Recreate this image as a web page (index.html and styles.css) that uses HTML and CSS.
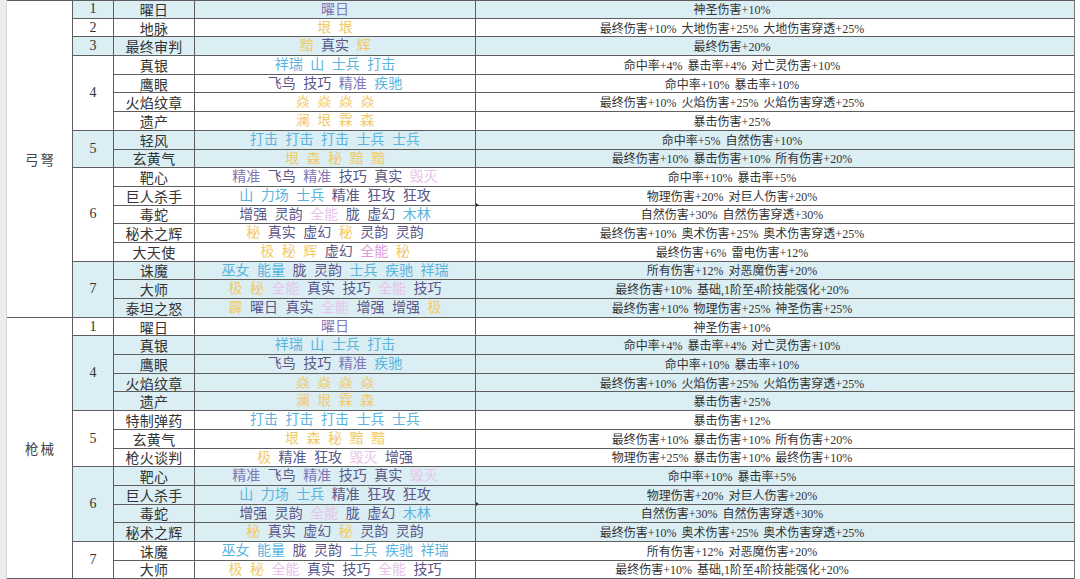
FILE: index.html
```
<!DOCTYPE html>
<html lang="zh-CN">
<head>
<meta charset="utf-8">
<title>套装效果</title>
<link rel="stylesheet" href="styles.css">
</head>
<body>
<div class="gutter"></div>
<div class="sheet">
  <!-- 弓弩 -->
  <div class="cat s17">弓弩</div>

  <div class="num a">1</div>
  <div class="name a">曜日</div>
  <div class="tags a"><span class="v">曜日</span></div>
  <div class="eff a">神圣伤害+10%</div>

  <div class="num">2</div>
  <div class="name">地脉</div>
  <div class="tags"><span class="g">垠</span> <span class="g">垠</span></div>
  <div class="eff">最终伤害+10% 大地伤害+25% 大地伤害穿透+25%</div>

  <div class="num a">3</div>
  <div class="name a">最终审判</div>
  <div class="tags a"><span class="g">黯</span> <span class="p">真实</span> <span class="g">辉</span></div>
  <div class="eff a">最终伤害+20%</div>

  <div class="num s4">4</div>
  <div class="name">真银</div>
  <div class="tags"><span class="b">祥瑞</span> <span class="b">山</span> <span class="b">士兵</span> <span class="b">打击</span></div>
  <div class="eff">命中率+4% 暴击率+4% 对亡灵伤害+10%</div>
  <div class="name">鹰眼</div>
  <div class="tags"><span class="p">飞鸟</span> <span class="p">技巧</span> <span class="v">精准</span> <span class="b">疾驰</span></div>
  <div class="eff">命中率+10% 暴击率+10%</div>
  <div class="name">火焰纹章</div>
  <div class="tags"><span class="g">焱</span> <span class="g">焱</span> <span class="g">焱</span> <span class="g">焱</span></div>
  <div class="eff">最终伤害+10% 火焰伤害+25% 火焰伤害穿透+25%</div>
  <div class="name">遗产</div>
  <div class="tags"><span class="g">澜</span> <span class="g">垠</span> <span class="g">霖</span> <span class="g">森</span></div>
  <div class="eff">暴击伤害+25%</div>

  <div class="num a s2">5</div>
  <div class="name a">轻风</div>
  <div class="tags a"><span class="b">打击</span> <span class="b">打击</span> <span class="b">打击</span> <span class="b">士兵</span> <span class="b">士兵</span></div>
  <div class="eff a">命中率+5% 自然伤害+10%</div>
  <div class="name a">玄黄气</div>
  <div class="tags a"><span class="g">垠</span> <span class="g">森</span> <span class="g">秘</span> <span class="g">黯</span> <span class="g">黯</span></div>
  <div class="eff a">最终伤害+10% 暴击伤害+10% 所有伤害+20%</div>

  <div class="num s5">6</div>
  <div class="name">靶心</div>
  <div class="tags"><span class="v">精准</span> <span class="p">飞鸟</span> <span class="v">精准</span> <span class="p">技巧</span> <span class="p">真实</span> <span class="k">毁灭</span></div>
  <div class="eff">命中率+10% 暴击率+5%</div>
  <div class="name">巨人杀手</div>
  <div class="tags"><span class="b">山</span> <span class="b">力场</span> <span class="b">士兵</span> <span class="p">精准</span> <span class="p">狂攻</span> <span class="p">狂攻</span></div>
  <div class="eff">物理伤害+20% 对巨人伤害+20%</div>
  <div class="name">毒蛇</div>
  <div class="tags"><span class="p">增强</span> <span class="p">灵韵</span> <span class="k">全能</span> <span class="p">胧</span> <span class="p">虚幻</span> <span class="b">木林</span></div>
  <div class="eff mark">自然伤害+30% 自然伤害穿透+30%</div>
  <div class="name">秘术之辉</div>
  <div class="tags"><span class="g">秘</span> <span class="p">真实</span> <span class="p">虚幻</span> <span class="g">秘</span> <span class="p">灵韵</span> <span class="p">灵韵</span></div>
  <div class="eff">最终伤害+10% 奥术伤害+25% 奥术伤害穿透+25%</div>
  <div class="name">大天使</div>
  <div class="tags"><span class="g">极</span> <span class="g">秘</span> <span class="g">辉</span> <span class="p">虚幻</span> <span class="m">全能</span> <span class="g">秘</span></div>
  <div class="eff">最终伤害+6% 雷电伤害+12%</div>

  <div class="num a s3">7</div>
  <div class="name a">诛魔</div>
  <div class="tags a"><span class="b">巫女</span> <span class="b">能量</span> <span class="p">胧</span> <span class="p">灵韵</span> <span class="b">士兵</span> <span class="b">疾驰</span> <span class="b">祥瑞</span></div>
  <div class="eff a">所有伤害+12% 对恶魔伤害+20%</div>
  <div class="name a">大师</div>
  <div class="tags a"><span class="g">极</span> <span class="g">秘</span> <span class="k">全能</span> <span class="p">真实</span> <span class="p">技巧</span> <span class="k">全能</span> <span class="p">技巧</span></div>
  <div class="eff a">最终伤害+10% 基础,1阶至4阶技能强化+20%</div>
  <div class="name a">泰坦之怒</div>
  <div class="tags a"><span class="g">霹</span> <span class="p">曜日</span> <span class="p">真实</span> <span class="k">全能</span> <span class="p">增强</span> <span class="p">增强</span> <span class="g">极</span></div>
  <div class="eff a">最终伤害+10% 物理伤害+25% 神圣伤害+25%</div>

  <!-- 枪械 -->
  <div class="cat s14">枪械</div>

  <div class="num">1</div>
  <div class="name">曜日</div>
  <div class="tags"><span class="v">曜日</span></div>
  <div class="eff">神圣伤害+10%</div>

  <div class="num a s4">4</div>
  <div class="name a">真银</div>
  <div class="tags a"><span class="b">祥瑞</span> <span class="b">山</span> <span class="b">士兵</span> <span class="b">打击</span></div>
  <div class="eff a">命中率+4% 暴击率+4% 对亡灵伤害+10%</div>
  <div class="name a">鹰眼</div>
  <div class="tags a"><span class="p">飞鸟</span> <span class="p">技巧</span> <span class="v">精准</span> <span class="b">疾驰</span></div>
  <div class="eff a">命中率+10% 暴击率+10%</div>
  <div class="name a">火焰纹章</div>
  <div class="tags a"><span class="g">焱</span> <span class="g">焱</span> <span class="g">焱</span> <span class="g">焱</span></div>
  <div class="eff a">最终伤害+10% 火焰伤害+25% 火焰伤害穿透+25%</div>
  <div class="name a">遗产</div>
  <div class="tags a"><span class="g">澜</span> <span class="g">垠</span> <span class="g">霖</span> <span class="g">森</span></div>
  <div class="eff a">暴击伤害+25%</div>

  <div class="num s3">5</div>
  <div class="name">特制弹药</div>
  <div class="tags"><span class="b">打击</span> <span class="b">打击</span> <span class="b">打击</span> <span class="b">士兵</span> <span class="b">士兵</span></div>
  <div class="eff">暴击伤害+12%</div>
  <div class="name">玄黄气</div>
  <div class="tags"><span class="g">垠</span> <span class="g">森</span> <span class="g">秘</span> <span class="g">黯</span> <span class="g">黯</span></div>
  <div class="eff">最终伤害+10% 暴击伤害+10% 所有伤害+20%</div>
  <div class="name">枪火谈判</div>
  <div class="tags"><span class="g">极</span> <span class="p">精准</span> <span class="p">狂攻</span> <span class="k">毁灭</span> <span class="p">增强</span></div>
  <div class="eff">物理伤害+25% 暴击伤害+10% 最终伤害+10%</div>

  <div class="num a s4">6</div>
  <div class="name a">靶心</div>
  <div class="tags a"><span class="v">精准</span> <span class="p">飞鸟</span> <span class="v">精准</span> <span class="p">技巧</span> <span class="p">真实</span> <span class="k">毁灭</span></div>
  <div class="eff a">命中率+10% 暴击率+5%</div>
  <div class="name a">巨人杀手</div>
  <div class="tags a"><span class="b">山</span> <span class="b">力场</span> <span class="b">士兵</span> <span class="p">精准</span> <span class="p">狂攻</span> <span class="p">狂攻</span></div>
  <div class="eff a">物理伤害+20% 对巨人伤害+20%</div>
  <div class="name a">毒蛇</div>
  <div class="tags a"><span class="p">增强</span> <span class="p">灵韵</span> <span class="k">全能</span> <span class="p">胧</span> <span class="p">虚幻</span> <span class="b">木林</span></div>
  <div class="eff a mark">自然伤害+30% 自然伤害穿透+30%</div>
  <div class="name a">秘术之辉</div>
  <div class="tags a"><span class="g">秘</span> <span class="p">真实</span> <span class="p">虚幻</span> <span class="g">秘</span> <span class="p">灵韵</span> <span class="p">灵韵</span></div>
  <div class="eff a">最终伤害+10% 奥术伤害+25% 奥术伤害穿透+25%</div>

  <div class="num s2">7</div>
  <div class="name">诛魔</div>
  <div class="tags"><span class="b">巫女</span> <span class="b">能量</span> <span class="p">胧</span> <span class="p">灵韵</span> <span class="b">士兵</span> <span class="b">疾驰</span> <span class="b">祥瑞</span></div>
  <div class="eff">所有伤害+12% 对恶魔伤害+20%</div>
  <div class="name">大师</div>
  <div class="tags"><span class="g">极</span> <span class="g">秘</span> <span class="k">全能</span> <span class="p">真实</span> <span class="p">技巧</span> <span class="k">全能</span> <span class="p">技巧</span></div>
  <div class="eff">最终伤害+10% 基础,1阶至4阶技能强化+20%</div>
</div>
</body>
</html>
```

FILE: styles.css
```
html, body {
  margin: 0;
  padding: 0;
  background: #ffffff;
  height: 579px;
  overflow: hidden;
}

body {
  display: flex;
  align-items: flex-start;
  font-family: "Liberation Serif", "Noto Sans CJK SC", serif;
  color: #3a3a3a;
}

.gutter {
  width: 6px;
  height: 579px;
  background: #ececec;
  border-right: 1px solid #d6d6d6;
  flex: none;
}

.sheet {
  display: grid;
  grid-template-columns: 66px 41px 81px 281px 599px;
  grid-template-rows: 17.7px repeat(30, 18.7px);
  border-top: 1px solid #5e5e5e;
  flex: none;
}

.sheet > div {
  box-sizing: border-box;
  border-right: 1px solid #5e5e5e;
  border-bottom: 1px solid #5e5e5e;
  display: flex;
  align-items: center;
  justify-content: center;
  white-space: nowrap;
  overflow: hidden;
  background: #ffffff;
}

.sheet > .a {
  background: #daeef3;
}

.cat {
  grid-column: 1;
  font-size: 13.5px;
  letter-spacing: 2px;
  color: #444444;
  padding-left: 2px;
}

.num {
  grid-column: 2;
  font-size: 14px;
  color: #333333;
}

.name {
  grid-column: 3;
  font-size: 14px;
  color: #333333;
  letter-spacing: 0.3px;
}

.sheet > .tags {
  grid-column: 4;
  display: block;
  text-align: center;
  font-size: 14px;
  line-height: 18px;
  word-spacing: 4px;
}

.eff {
  grid-column: 5;
  font-size: 12px;
  word-spacing: 2px;
  color: #333333;
  padding-right: 86px;
}

.sheet > .eff {
  border-right: 1px solid #7a7a7a;
}

.s2 { grid-row: span 2; }
.s3 { grid-row: span 3; }
.s4 { grid-row: span 4; }
.s5 { grid-row: span 5; }
.s14 { grid-row: span 14; }
.s17 { grid-row: span 17; }

.b { color: #59b4de; }
.g { color: #f2cb68; }
.p { color: #5a5688; }
.v { color: #8276b6; }
.k { color: #e8c4ea; }
.m { color: #df9cdc; }

.sheet > .mark {
  position: relative;
  overflow: visible;
}

.mark::before {
  content: "";
  position: absolute;
  left: 0;
  top: -3px;
  border-top: 2px solid transparent;
  border-bottom: 2px solid transparent;
  border-left: 3px solid #333333;
}
```
